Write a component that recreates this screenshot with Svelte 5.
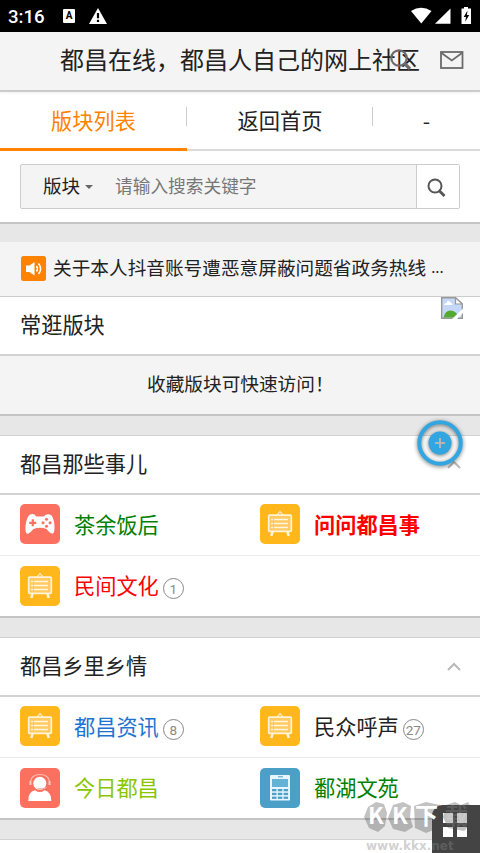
<script>
  const tabs = ["版块列表", "返回首页", "-"];

  const groups = [
    {
      title: "都昌那些事儿",
      forums: [
        { name: "茶余饭后", icon: "game", color: "#008000" },
        { name: "问问都昌事", icon: "board", color: "#ff0000", bold: true },
        { name: "民间文化", icon: "board", color: "#ff0000", count: 1 },
      ],
    },
    {
      title: "都昌乡里乡情",
      forums: [
        { name: "都昌资讯", icon: "board", color: "#1e73d2", count: 8 },
        { name: "民众呼声", icon: "board", color: "#222", count: 27 },
        { name: "今日都昌", icon: "service", color: "#8ac600" },
        { name: "鄱湖文苑", icon: "phone", color: "#008000" },
      ],
    },
  ];
</script>

{#snippet forumIcon(kind)}
  <svg class="forum-icon {kind}" viewBox="0 0 40 40">
    {#if kind === "game"}
      <path
        fill="#fff"
        d="M10 10.5 Q14 9 16.2 12.5 L23.500 12.5 Q27 9 31 11 C34 13 35.5 24 34 28 C32.500 31.500 29.500 28.500 26.500 25 Q20 22.500 13.500 25 C10.500 28.500 7.500 31.500 6 28.500 C4.500 25 6 13 10 10.500Z"
      />
      <path d="M9.300 18.800 H16.300 M12.800 15.300 V22.300" stroke="#fb705f" stroke-width="2.2" />
      <g fill="#fb705f">
        <circle cx="26.500" cy="15.300" r="1.500" />
        <circle cx="26.500" cy="22.300" r="1.500" />
        <circle cx="23" cy="18.800" r="1.500" />
        <circle cx="30" cy="18.800" r="1.500" />
      </g>
    {:else if kind === "board"}
      <path d="M17 11 L20 7.500 L23 11" fill="none" stroke="#ffe4ac" stroke-width="1.300" />
      <path d="M12.700 27 L11.300 32 M27.300 27 L28.700 32" stroke="#fff3d8" stroke-width="2.600" />
      <rect x="8.700" y="11.200" width="22.600" height="16.200" rx=".8" fill="#ffca61" stroke="#fff3d8" stroke-width="1.700" />
      <path d="M11 15.500 h2 M14 15.500 h14 M11 19.500 h2 M14 19.500 h14 M11 23.500 h2 M14 23.500 h14" stroke="#fff6e2" stroke-width="1.500" />
    {:else if kind === "service"}
      <path d="M10.300 17 Q10 6.500 20 6.500 Q30 6.500 29.700 17" fill="none" stroke="#ffb9ae" stroke-width="1.200" />
      <path d="M10.500 13 v4 M29.500 13 v4" stroke="#ffc9c0" stroke-width="2" />
      <circle cx="19.800" cy="15.300" r="6.500" fill="#fff" />
      <path d="M8.300 33 Q8 24 15 22.200 Q20 26 24.500 22.200 Q31.500 24 31.300 33Z" fill="#fff" />
      <path d="M17.500 20.800 h4.500 q3 0 4.500-2" fill="none" stroke="#fba79c" stroke-width="1.200" />
    {:else}
      <rect x="10" y="7" width="20" height="25.500" rx="1" fill="#e8f5fc" />
      <path d="M18 8.800 h5" stroke="#4ca0c8" stroke-width="1" />
      <rect x="12" y="11" width="16" height="8" fill="#65b2d7" />
      <g fill="#4ca0c8">
        {#each [21, 24.8, 28.6] as y}
          {#each [12, 17.8, 23.6] as x}
            <rect {x} {y} width="4.500" height="2.300" />
          {/each}
        {/each}
      </g>
    {/if}
  </svg>
{/snippet}

<div class="screen">
  <div class="status">
    <span class="time">3:16</span>
    <span class="a-badge"><b>A</b></span>
    <svg class="warn" width="18" height="16" viewBox="0 0 18 16">
      <path d="M9 0 L18 16 H0Z" fill="#fff" />
      <path d="M9 5 V10.300 M9 11.800 V14" stroke="#000" stroke-width="2.200" />
    </svg>
    <svg class="signals" width="62" height="20" viewBox="0 0 62 20">
      <path d="M1 5 Q11 -1.500 21.500 5 L11.300 17.500Z" fill="#fff" />
      <path d="M40.500 2.500 V17.800 H25Z" fill="#fff" />
      <path d="M54 1 h4 v1.500 h3 v15.500 h-9.500 V2.500 h2.500Z" fill="#fff" />
      <path d="M57.500 4.500 L53.700 11 h2.300 l-.8 4.800 4-6.800 h-2.300Z" fill="#000" />
    </svg>
  </div>

  <header>
    <h1>都昌在线，都昌人自己的网上社区</h1>
    <svg class="head-search" width="22" height="24" viewBox="0 0 22 24">
      <circle cx="9" cy="10" r="7.700" fill="none" stroke="#6b6b6b" stroke-width="2.200" />
      <path d="M14 15 L20 21" stroke="#6b6b6b" stroke-width="3.200" />
    </svg>
    <svg class="mail" width="24" height="18" viewBox="0 0 24 18">
      <rect x="1" y="1" width="21.500" height="16" fill="none" stroke="#6b6b6b" stroke-width="1.800" />
      <path d="M1.500 2 L11.800 9.500 L22 2" fill="none" stroke="#6b6b6b" stroke-width="1.800" />
    </svg>
  </header>

  <nav>
    {#each tabs as tab, i}
      <div class="tab" class:active={i === 0}>{tab}</div>
    {/each}
  </nav>

  <div class="search">
    <div class="search-box">
      <span class="scope">版块</span>
      <span class="caret"></span>
      <span class="placeholder">请输入搜索关键字</span>
      <div class="go">
        <svg width="19" height="20" viewBox="0 0 19 20">
          <circle cx="8" cy="8" r="6.500" fill="none" stroke="#555" stroke-width="2" />
          <path d="M12 12.500 L17.500 18" stroke="#555" stroke-width="2.800" />
        </svg>
      </div>
    </div>
  </div>

  <div class="gap"></div>

  <div class="notice">
    <svg width="25" height="25" viewBox="0 0 25 25">
      <rect width="25" height="25" rx="2.500" fill="#ff8200" />
      <path d="M5 9.500 H8.500 L13.500 6 V19.500 L8.500 16 H5Z" fill="#fff" />
      <path d="M15.500 10 Q17.500 12.700 15.500 15.500 M17.500 7.500 Q21.700 12.700 17.500 18" fill="none" stroke="#fff" stroke-width="1.500" />
    </svg>
    <span>关于本人抖音账号遭恶意屏蔽问题省政务热线</span>
    <span class="dots">...</span>
  </div>

  <div class="title fav">
    <span>常逛版块</span>
    <!-- 画像が読めないときのアイコン -->
    <svg class="broken" width="22" height="22" viewBox="0 0 22 22">
      <path d="M.7 .7 H14.500 L21.300 7 V21.300 H.7Z" fill="#c5d8fa" stroke="#999" stroke-width="1.400" />
      <path d="M3 8 Q3 6 5.500 6 Q7 2 9.500 5.500 Q11.500 6 11.500 8Z" fill="#fff" />
      <path d="M2.500 20.600 Q4 13.500 9.500 13.500 Q15 13.500 18 20.600Z" fill="#53aa2e" />
      <path d="M14.500 .7 V7 H21.300Z" fill="#fff" stroke="#999" stroke-width="1.200" />
      <path d="M11 22 L22.500 11 V15.500 L16 22Z" fill="#fff" />
    </svg>
  </div>
  <div class="tip">收藏版块可快速访问！</div>

  {#each groups as group}
    <div class="gap lined"></div>
    <div class="title">
      <span>{group.title}</span>
      <svg class="fold" width="14" height="9" viewBox="0 0 14 9">
        <path d="M1 8 L7 2 L13 8" fill="none" stroke="#b9b9b9" stroke-width="2" />
      </svg>
    </div>
    <div class="forums">
      {#each group.forums as forum}
        <div class="forum">
          {@render forumIcon(forum.icon)}
          <span class="name" class:bold={forum.bold} style="color: {forum.color}">{forum.name}</span>
          {#if forum.count}
            <span class="count">{forum.count}</span>
          {/if}
        </div>
      {/each}
    </div>
  {/each}
  <div class="gap lined"></div>

  <div class="float">
    <svg width="60" height="60" viewBox="0 0 60 60">
      <circle cx="30" cy="30" r="20.700" fill="none" stroke="#32a6e0" stroke-width="4" />
      <circle cx="30" cy="30" r="11.500" fill="#32a6e0" />
      <path d="M30 25 V35 M25 30 H35" stroke="#b5b5b5" stroke-width="2" />
    </svg>
  </div>

  <div class="menu">
    <i></i><i></i><i></i><i></i>
  </div>

  <div class="mark">
    <svg width="116" height="34" viewBox="0 0 116 34">
      <g fill="#444" opacity=".32">
        <path d="M4 6 L12 1 L20 3 L23 12 L21 25 L14 31 L5 27 L0 16Z" />
        <path d="M29 4 L39 1 L47 5 L46 16 L49 26 L41 31 L29 28 L24 17Z" />
        <path d="M50 5 L62 1 L76 4 L78 16 L75 27 L62 32 L51 27Z" />
        <path d="M82 4 L91 1 L97 4 L104 1 L109 10 L106 24 L100 30 L84 27 L79 16Z" />
      </g>
      <g fill="#fff" font-size="23" font-family="'Noto Sans CJK SC', sans-serif">
        <text x="4" y="23">K</text>
        <text x="28" y="23">K</text>
        <text x="51" y="23">下</text>
        <text x="81" y="23" opacity=".12">载</text>
      </g>
    </svg>
    <div>www.kkx.net</div>
  </div>
</div>

<style>
  :global(body) {
    background: #fff;
    overflow: hidden;
  }
  .screen {
    position: relative;
    width: 480px;
    height: 853px;
    overflow: hidden;
    background: #fff;
    color: #222;
    font-family: "Noto Sans CJK SC", sans-serif;
    font-size: 21.200px;
    white-space: nowrap;
  }
  .screen * {
    box-sizing: border-box;
  }
  svg {
    display: block;
    flex: none;
  }

  /* ステータスバー */
  .status {
    display: flex;
    align-items: center;
    height: 32px;
    padding: 0 8px;
    background: #000;
    color: #fff;
  }
  .time {
    width: 55px;
    padding-top: 1px;
    font: 500 18.600px Roboto, sans-serif;
  }
  .a-badge {
    width: 12px;
    height: 14px;
    background: #fff;
    color: #000;
    border-radius: 1px;
    text-align: center;
    font: 10px/13px Roboto, sans-serif;
  }
  .warn {
    margin-left: 14px;
  }
  .signals {
    margin-left: auto;
  }

  header {
    position: relative;
    display: flex;
    align-items: center;
    height: 60px;
    padding: 0 16px 3px 60px;
    background: #f4f4f4;
    border-bottom: 2px solid #cbcbcb;
    box-shadow: 0 1px 3px #0001;
  }
  h1 {
    margin: 0;
    padding-bottom: 2px;
    font-size: 24px;
    font-weight: 400;
    line-height: 53px;
  }
  .head-search {
    position: absolute;
    left: 390px;
    top: 16px;
  }
  .mail {
    margin-left: auto;
    margin-top: 1px;
  }

  nav {
    display: flex;
    height: 59px;
    border-bottom: 2px solid #dadada;
  }
  .tab {
    position: relative;
    width: 186px;
    height: 59px;
    flex: none;
    text-align: center;
    line-height: 55px;
  }
  .tab:last-child {
    width: 107px;
  }
  .tab:not(:last-child)::after {
    content: "";
    position: absolute;
    right: 0;
    top: 15px;
    width: 1px;
    height: 19px;
    background: #ccc;
  }
  .tab.active {
    width: 187px;
    color: #ff8200;
    border-bottom: 3px solid #ff8200;
  }

  .search {
    height: 73px;
    padding: 13px 20px 0;
    border-bottom: 2px solid #c4c4c4;
  }
  .search-box {
    display: flex;
    align-items: center;
    height: 45px;
    padding-left: 22px;
    border: 1px solid #ccc;
    border-radius: 2px;
    background: #f4f4f4;
  }
  .scope {
    width: 42px;
    padding-bottom: 4px;
    font-size: 18.600px;
    line-height: 38px;
  }
  .caret {
    width: 8px;
    border: 4px solid transparent;
    border-top-color: #666;
    border-bottom: 0;
    margin-top: 1px;
  }
  .placeholder {
    margin-left: 22px;
    padding-bottom: 4px;
    font-size: 17.700px;
    line-height: 38px;
    color: #777;
  }
  .go {
    display: flex;
    align-items: center;
    justify-content: center;
    width: 43px;
    height: 43px;
    margin-left: auto;
    padding: 2px 3px 0 0;
    background: #fff;
    border-left: 1px solid #ccc;
  }

  .gap {
    height: 18px;
    background: #e7e7e7;
  }
  .gap.lined {
    height: 20px;
    border-bottom: 1px solid #d2d2d2;
  }

  .notice {
    display: flex;
    align-items: center;
    height: 55px;
    padding: 0 0 2px 21px;
    background: #f4f4f4;
    border-bottom: 1px solid #ccc;
    font-size: 18.670px;
    line-height: 50px;
  }
  .notice span {
    margin-left: 7px;
    padding-bottom: 2px;
  }
  .notice .dots {
    margin-left: 5px;
    font-size: 15px;
  }

  .title {
    display: flex;
    align-items: center;
    height: 59px;
    padding: 0 19px 1px 20px;
    border-bottom: 2px solid #d2d2d2;
    line-height: 53px;
  }
  .title span {
    padding-bottom: 3px;
  }
  .fold {
    margin-left: auto;
  }
  .fav {
    align-items: flex-start;
    padding-right: 17px;
    line-height: 54px;
  }
  .broken {
    margin-left: auto;
  }
  .tip {
    height: 60px;
    padding-left: 147px;
    background: #f4f4f4;
    border-bottom: 2px solid #c4c4c4;
    font-size: 18.670px;
    line-height: 54px;
  }

  .forums {
    display: flex;
    flex-wrap: wrap;
    border-bottom: 2px solid #c4c4c4;
  }
  .forum {
    display: flex;
    align-items: center;
    width: 240px;
    height: 60px;
    padding: 0 0 1px 20px;
  }
  .forum:nth-child(-n + 2) {
    height: 61px;
    padding-bottom: 2px;
    border-bottom: 1px solid #ececec;
  }
  .forum-icon {
    width: 40px;
    height: 40px;
    border-radius: 5px;
  }
  .game,
  .service {
    background: #fb705f;
  }
  .board {
    background: #ffb71b;
  }
  .phone {
    background: #4ca0c8;
  }
  .name {
    margin-left: 14px;
    padding-bottom: 2px;
  }
  .bold {
    font-weight: 700;
  }
  .count {
    width: 21px;
    height: 21px;
    margin: 6px 0 0 4px;
    border: 1px solid #888;
    border-radius: 50%;
    color: #888;
    text-align: center;
    font: 400 13.500px/20px Roboto, sans-serif;
  }

  /* 画面の上に浮いているボタン */
  .float {
    position: absolute;
    left: 410px;
    top: 413px;
    filter: drop-shadow(0 1px 2px #0008);
  }
  .menu {
    position: absolute;
    left: 432px;
    top: 805px;
    display: grid;
    grid-template-columns: 10px 10px;
    grid-auto-rows: 10px;
    gap: 4px;
    width: 60px;
    height: 60px;
    padding: 8px 11px;
    border-top-left-radius: 11px;
    background: #444;
  }
  .menu i {
    background: #fff;
  }
  .mark {
    position: absolute;
    left: 364px;
    top: 801px;
    color: #8886;
    font: 700 12px/14px "DejaVu Sans", sans-serif;
  }
  .mark svg {
    overflow: visible;
  }
  .mark div {
    margin: 4px 0 0 2px;
  }
</style>
